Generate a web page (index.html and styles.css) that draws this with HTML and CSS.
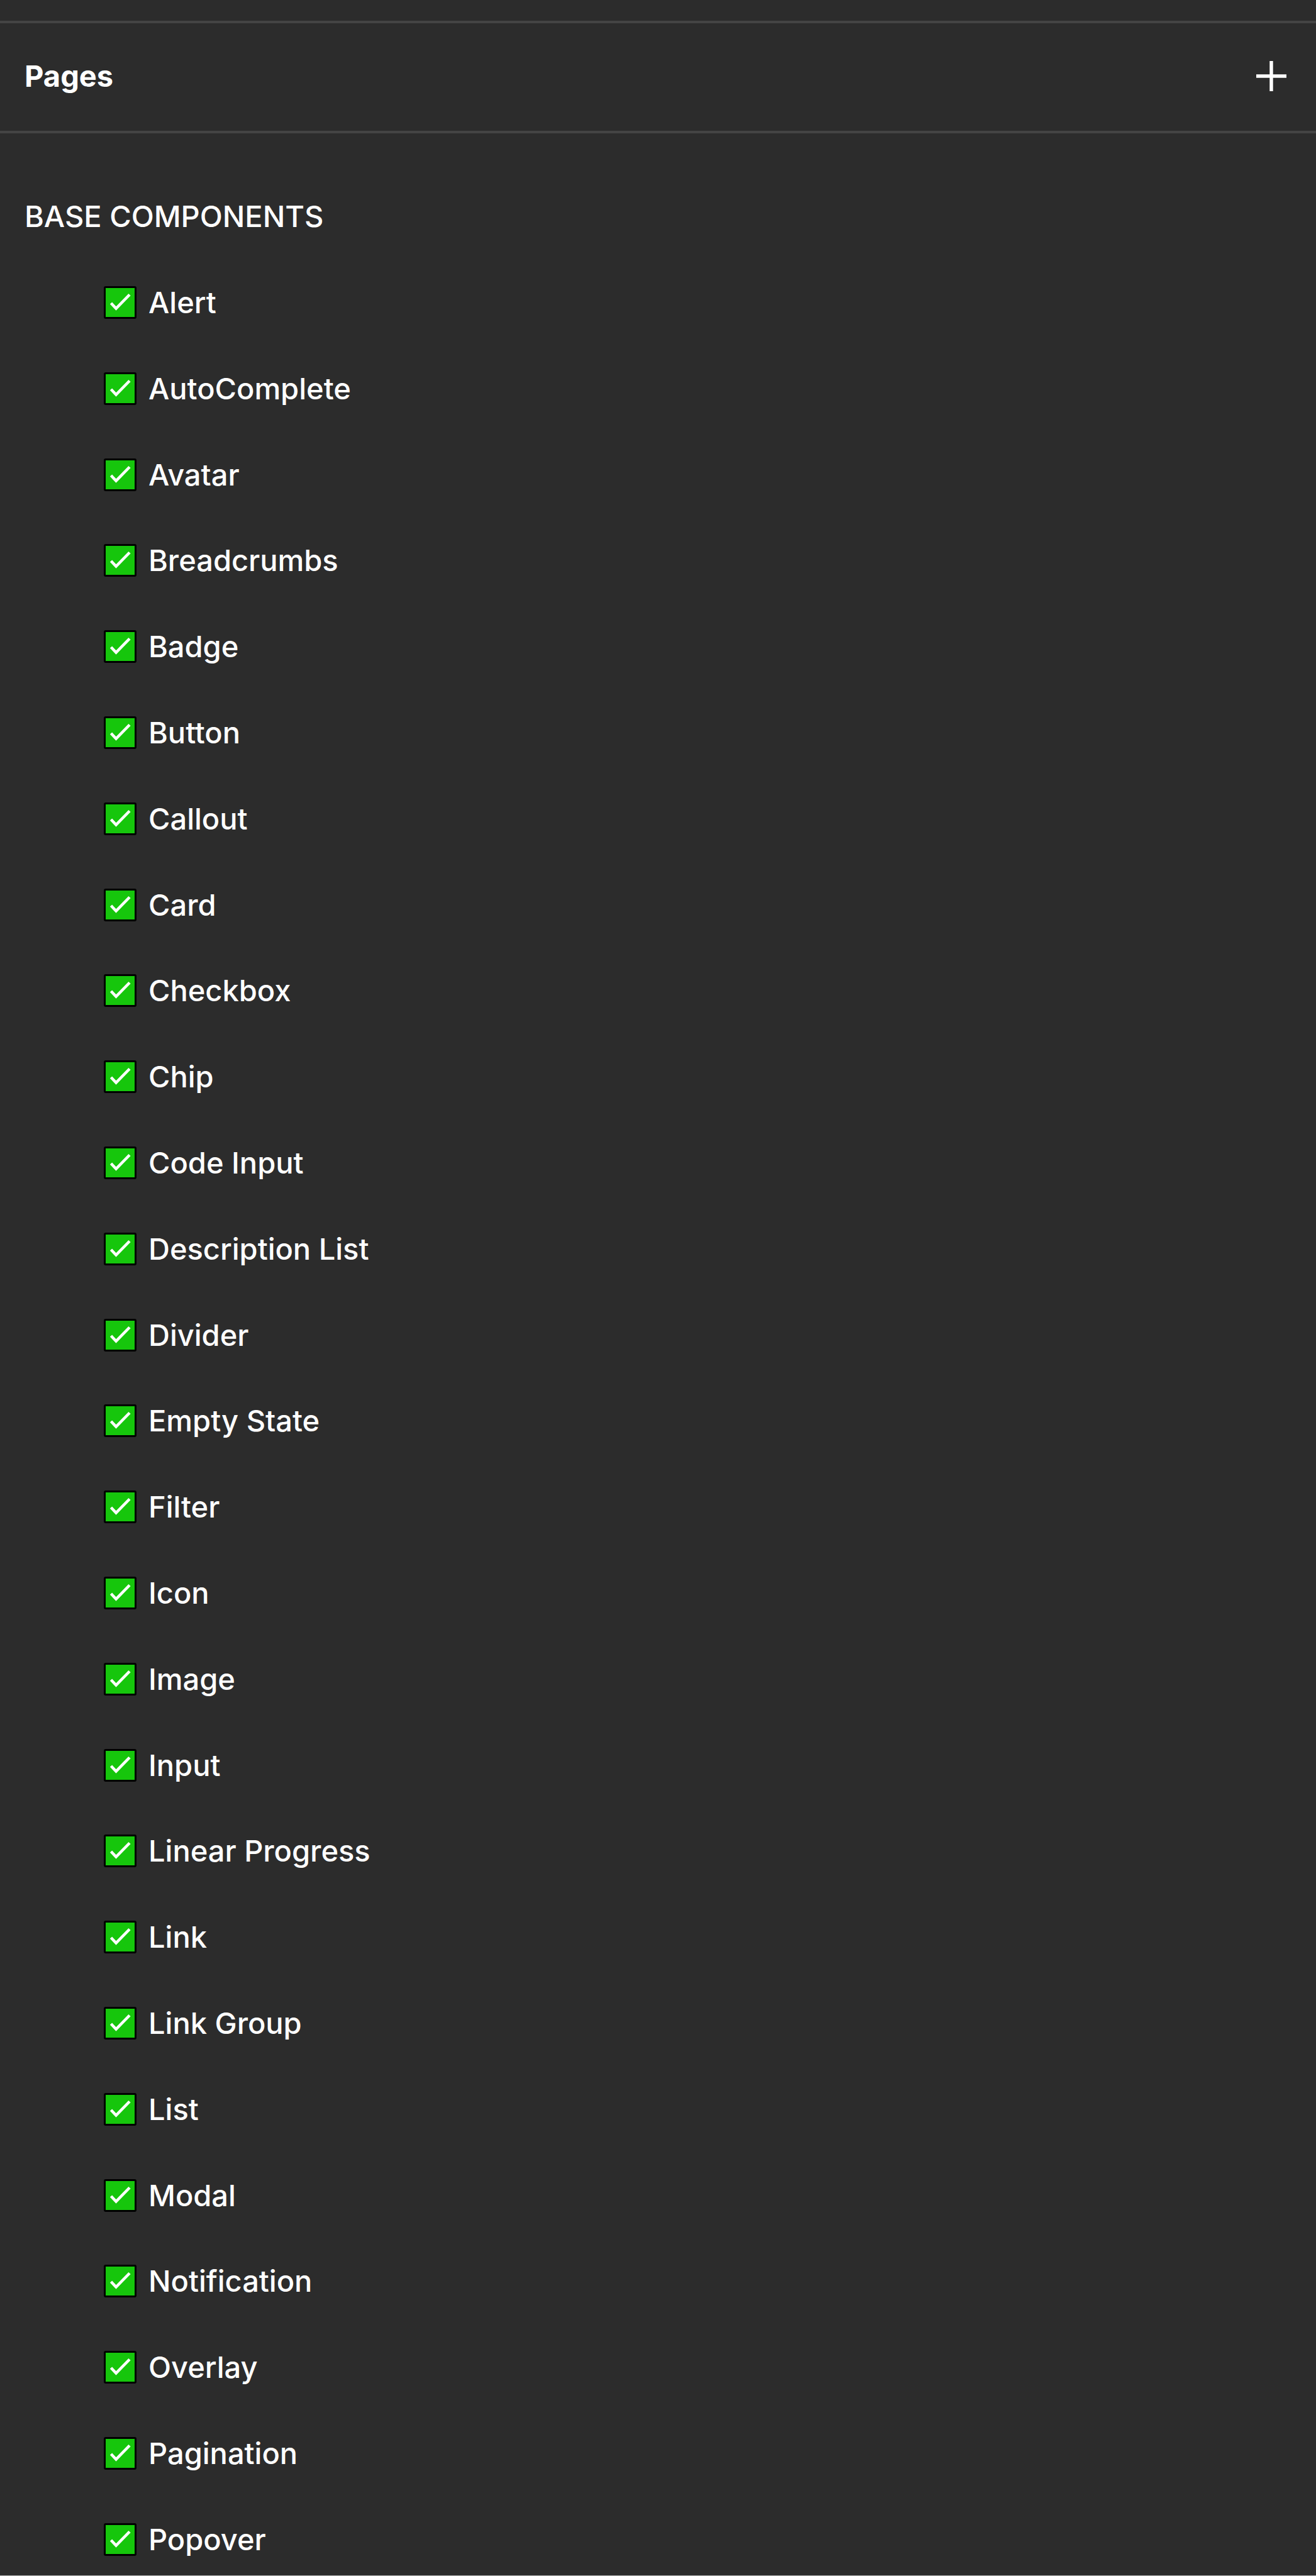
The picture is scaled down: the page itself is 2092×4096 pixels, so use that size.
FILE: index.html
```html
<!DOCTYPE html>
<html lang="en">
<head>
<meta charset="utf-8">
<title>Pages</title>
<link rel="stylesheet" href="styles.css">
</head>
<body>
<header class="header">
  <h1 class="title">Pages</h1>
  <button class="add" type="button" aria-label="Add page">
    <svg class="add-icon" viewBox="0 0 48 48" aria-hidden="true"><path d="M24 0v48M0 24h48" stroke="currentColor" stroke-width="5.400"/></svg>
  </button>
</header>
<main class="pages">
  <h2 class="section">BASE COMPONENTS</h2>
  <ul class="list">
    <li><label class="page"><input class="check" type="checkbox" checked>Alert</label></li>
    <li><label class="page"><input class="check" type="checkbox" checked>AutoComplete</label></li>
    <li><label class="page"><input class="check" type="checkbox" checked>Avatar</label></li>
    <li><label class="page"><input class="check" type="checkbox" checked>Breadcrumbs</label></li>
    <li><label class="page"><input class="check" type="checkbox" checked>Badge</label></li>
    <li><label class="page"><input class="check" type="checkbox" checked>Button</label></li>
    <li><label class="page"><input class="check" type="checkbox" checked>Callout</label></li>
    <li><label class="page"><input class="check" type="checkbox" checked>Card</label></li>
    <li><label class="page"><input class="check" type="checkbox" checked>Checkbox</label></li>
    <li><label class="page"><input class="check" type="checkbox" checked>Chip</label></li>
    <li><label class="page"><input class="check" type="checkbox" checked>Code Input</label></li>
    <li><label class="page"><input class="check" type="checkbox" checked>Description List</label></li>
    <li><label class="page"><input class="check" type="checkbox" checked>Divider</label></li>
    <li><label class="page"><input class="check" type="checkbox" checked>Empty State</label></li>
    <li><label class="page"><input class="check" type="checkbox" checked>Filter</label></li>
    <li><label class="page"><input class="check" type="checkbox" checked>Icon</label></li>
    <li><label class="page"><input class="check" type="checkbox" checked>Image</label></li>
    <li><label class="page"><input class="check" type="checkbox" checked>Input</label></li>
    <li><label class="page"><input class="check" type="checkbox" checked>Linear Progress</label></li>
    <li><label class="page"><input class="check" type="checkbox" checked>Link</label></li>
    <li><label class="page"><input class="check" type="checkbox" checked>Link Group</label></li>
    <li><label class="page"><input class="check" type="checkbox" checked>List</label></li>
    <li><label class="page"><input class="check" type="checkbox" checked>Modal</label></li>
    <li><label class="page"><input class="check" type="checkbox" checked>Notification</label></li>
    <li><label class="page"><input class="check" type="checkbox" checked>Overlay</label></li>
    <li><label class="page"><input class="check" type="checkbox" checked>Pagination</label></li>
    <li><label class="page"><input class="check" type="checkbox" checked>Popover</label></li>
  </ul>
</main>
</body>
</html>
```
FILE: styles.css
```css
* {
  box-sizing: border-box;
}

body {
  display: flex;
  flex-direction: column;
  min-height: 100vh;
  margin: 0;
  padding-top: 33px;
  border-bottom: 1px solid #b8b8b8;
  background: #2c2c2c;
  color: #fff;
  font-family: Inter, "Liberation Sans", sans-serif;
  font-size: 47px;
  font-weight: 500;
  line-height: 60px;
}

.header {
  display: flex;
  align-items: center;
  justify-content: space-between;
  padding: 54px 44px 57px 39px;
  border-top: 4px solid #444;
  border-bottom: 4px solid #444;
}

.title,
.section {
  margin: 0;
  font-size: inherit;
}

.title {
  font-weight: 700;
}

.section {
  font-weight: inherit;
}

.add {
  display: flex;
  padding: 3px;
  border: 0;
  background: none;
  color: inherit;
}

.add-icon {
  width: 48px;
  height: 48px;
}

.pages {
  display: flex;
  flex: 1;
  flex-direction: column;
  gap: 77px;
  padding: 102px 39px 27px;
}

.list {
  display: flex;
  flex: 1;
  flex-direction: column;
  justify-content: space-between;
  margin: 0;
  padding: 0 0 0 126px;
  list-style: none;
}

.page {
  display: flex;
  align-items: center;
  gap: 19px;
}

.check {
  width: 52px;
  height: 52px;
  margin: 0;
  appearance: none;
  border: 3px solid #000;
  border-radius: 3px;
  background: #16c60c;
}

.check:checked {
  background-image: url("data:image/svg+xml,%3Csvg xmlns='http://www.w3.org/2000/svg' viewBox='0 0 46 46'%3E%3Cpath d='M8.5 24l8 8.500L38 10.500' fill='none' stroke='%23fff' stroke-width='4.600'/%3E%3C/svg%3E");
}
```
